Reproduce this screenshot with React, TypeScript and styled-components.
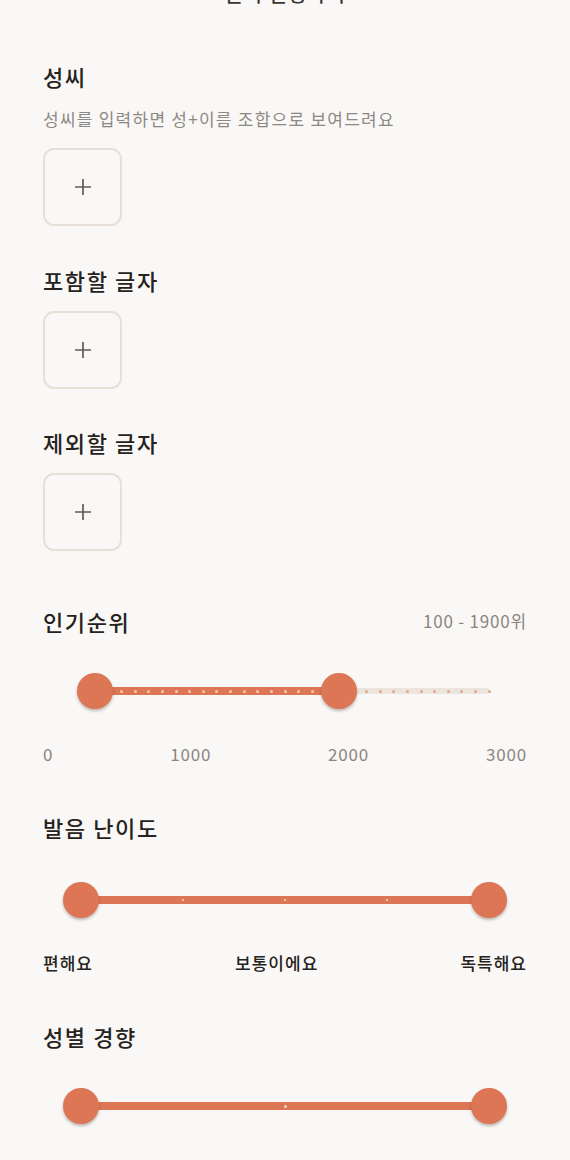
import React from "react";
import styled, { createGlobalStyle } from "styled-components";

const GlobalStyle = createGlobalStyle`
  html, body {
    margin: 0;
    padding: 0;
    background: #f9f8f6;
  }
  body {
    font-family: "Noto Sans CJK KR", "Noto Sans", sans-serif;
    color: #262220;
    overflow: hidden;
  }
`;

const ACCENT = "#dc7655";

const Page = styled.div`
  width: 570px;
  box-sizing: border-box;
  padding: 0 43px;
  display: flex;
  flex-direction: column;
`;

const TopTitle = styled.div`
  margin-top: -20px;
  height: 28px;
  line-height: 28px;
  font-size: 20px;
  font-weight: 500;
  letter-spacing: 1px;
  text-align: center;
  color: #3a3633;
`;

const Section = styled.section<{ $gap: number }>`
  margin-top: ${(p) => p.$gap}px;
  display: flex;
  flex-direction: column;
`;

const HeadRow = styled.div`
  display: flex;
  align-items: flex-start;
  justify-content: space-between;
  margin-bottom: 4px;
`;

const Heading = styled.h2<{ $bottom?: number }>`
  margin: 0 0 ${(p) => p.$bottom ?? 4}px;
  font-size: 22px;
  line-height: 28px;
  font-weight: 500;
  letter-spacing: 1.6px;
  color: #262220;
`;

const RangeValue = styled.span`
  font-size: 17px;
  line-height: 28px;
  letter-spacing: 0.8px;
  color: #8a8580;
`;

const Hint = styled.p`
  margin: 13px 0 0;
  font-size: 17px;
  line-height: 24px;
  letter-spacing: 1.25px;
  color: #8d8884;
`;

const AddBox = styled.button<{ $top: number }>`
  margin-top: ${(p) => p.$top}px;
  width: 79px;
  height: 78px;
  box-sizing: border-box;
  border: 2px solid #e6e0d7;
  border-radius: 11px;
  background: transparent;
  display: flex;
  align-items: center;
  justify-content: center;
  padding: 0;
  cursor: pointer;
`;

const SliderWrap = styled.div<{ $top: number }>`
  margin-top: ${(p) => p.$top}px;
  height: 48px;
  position: relative;
  padding: 0 38px;
  display: flex;
  align-items: center;
`;

const TrackArea = styled.div`
  position: relative;
  flex: 1;
  height: 8px;
  display: flex;
  align-items: center;
`;

const InactiveTrack = styled.div`
  position: absolute;
  left: 0;
  right: 0;
  height: 6px;
  border-radius: 3px;
  background: #ebe5de;
`;

const ActiveTrack = styled.div`
  position: absolute;
  height: 8px;
  background: ${ACCENT};
`;

const Tick = styled.span<{ $on: boolean; $size: number; $onColor: string; $offColor: string }>`
  position: absolute;
  width: ${(p) => p.$size}px;
  height: ${(p) => p.$size}px;
  margin-left: ${(p) => -p.$size / 2}px;
  border-radius: 50%;
  background: ${(p) => (p.$on ? p.$onColor : p.$offColor)};
`;

const Thumb = styled.span`
  position: absolute;
  width: 36px;
  height: 36px;
  margin-left: -18px;
  border-radius: 50%;
  background: ${ACCENT};
  box-shadow: 0 2px 3px rgba(60, 30, 20, 0.3);
`;

const LabelRow = styled.div`
  margin-top: 27px;
  display: flex;
  justify-content: space-between;
`;

const ScaleLabel = styled.span`
  font-size: 17px;
  line-height: 24px;
  letter-spacing: 0.8px;
  color: #8a8580;
`;

const StepLabel = styled.span`
  font-size: 17px;
  line-height: 24px;
  font-weight: 500;
  letter-spacing: 1px;
  color: #262220;
`;

const PlusIcon = () => (
  <svg width="18" height="18" viewBox="0 0 18 18">
    <path d="M9 1v16M1 9h16" stroke="#615c58" strokeWidth="1.7" fill="none" />
  </svg>
);

type SliderProps = {
  top: number;
  min: number;
  max: number;
  step: number;
  low: number;
  high: number;
  tickSize: number;
  onColor: string;
  offColor: string;
};

const RangeSlider = ({ top, min, max, step, low, high, tickSize, onColor, offColor }: SliderProps) => {
  const pct = (v: number) => ((v - min) / (max - min)) * 100;
  const count = Math.round((max - min) / step);
  const ticks = Array.from({ length: count + 1 }, (_, i) => min + i * step);
  return (
    <SliderWrap $top={top}>
      <TrackArea>
        <InactiveTrack />
        <ActiveTrack style={{ left: `${pct(low)}%`, width: `${pct(high) - pct(low)}%` }} />
        {ticks.map((t) => (
          <Tick
            key={t}
            $on={t >= low && t <= high}
            $size={tickSize}
            $onColor={onColor}
            $offColor={offColor}
            style={{ left: `${pct(t)}%` }}
          />
        ))}
        <Thumb style={{ left: `${pct(low)}%` }} />
        <Thumb style={{ left: `${pct(high)}%` }} />
      </TrackArea>
    </SliderWrap>
  );
};

export default function App() {
  return (
    <>
      <GlobalStyle />
      <Page>
        <TopTitle>필터 설정하기</TopTitle>

        <Section $gap={54}>
          <Heading>성씨</Heading>
          <Hint>성씨를 입력하면 성+이름 조합으로 보여드려요</Hint>
          <AddBox $top={17} aria-label="성씨 추가">
            <PlusIcon />
          </AddBox>
        </Section>

        <Section $gap={40}>
          <Heading>포함할 글자</Heading>
          <AddBox $top={13} aria-label="포함할 글자 추가">
            <PlusIcon />
          </AddBox>
        </Section>

        <Section $gap={39}>
          <Heading>제외할 글자</Heading>
          <AddBox $top={13} aria-label="제외할 글자 추가">
            <PlusIcon />
          </AddBox>
        </Section>

        <Section $gap={56}>
          <HeadRow>
            <Heading $bottom={0}>인기순위</Heading>
            <RangeValue>100 - 1900위</RangeValue>
          </HeadRow>
          <RangeSlider
            top={28}
            min={0}
            max={3000}
            step={100}
            low={100}
            high={1900}
            tickSize={3}
            onColor="#f4c6b2"
            offColor="#e6a48c"
          />
          <LabelRow>
            <ScaleLabel>0</ScaleLabel>
            <ScaleLabel>1000</ScaleLabel>
            <ScaleLabel>2000</ScaleLabel>
            <ScaleLabel>3000</ScaleLabel>
          </LabelRow>
        </Section>

        <Section $gap={47}>
          <Heading>발음 난이도</Heading>
          <RangeSlider
            top={31}
            min={0}
            max={4}
            step={1}
            low={0}
            high={4}
            tickSize={2}
            onColor="#f7d9cc"
            offColor="#e6a48c"
          />
          <LabelRow>
            <StepLabel>편해요</StepLabel>
            <StepLabel>보통이에요</StepLabel>
            <StepLabel>독특해요</StepLabel>
          </LabelRow>
        </Section>

        <Section $gap={47}>
          <Heading>성별 경향</Heading>
          <RangeSlider
            top={28}
            min={0}
            max={2}
            step={1}
            low={0}
            high={2}
            tickSize={3}
            onColor="#f7d9cc"
            offColor="#e6a48c"
          />
          <LabelRow>
            <StepLabel>남성적</StepLabel>
            <StepLabel>중성적</StepLabel>
            <StepLabel>여성적</StepLabel>
          </LabelRow>
        </Section>
      </Page>
    </>
  );
}
